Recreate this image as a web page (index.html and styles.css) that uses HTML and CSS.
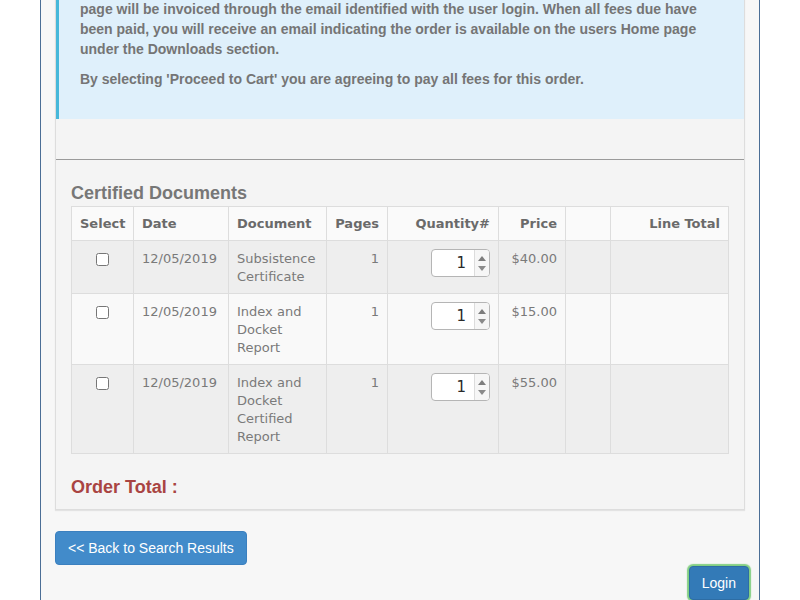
FILE: index.html
```html
<!DOCTYPE html>
<html>
<head>
<meta charset="utf-8">
<link rel="stylesheet" href="styles.css">
</head>
<body>
<div class="page">
  <div class="panel">
    <div class="callout">
      <p class="first">page will be invoiced through the email identified with the user login. When all fees due have been paid, you will receive an email indicating the order is available on the users Home page under the Downloads section.</p>
      <p class="last">By selecting 'Proceed to Cart' you are agreeing to pay all fees for this order.</p>
    </div>
    <div class="divider"></div>
    <div class="section">
      <h4 class="section-title">Certified Documents</h4>
      <table class="docs">
        <colgroup>
          <col class="c-select"><col class="c-date"><col class="c-doc"><col class="c-pages"><col class="c-qty"><col class="c-price"><col class="c-blank"><col class="c-total">
        </colgroup>
        <thead>
          <tr>
            <th class="center">Select</th>
            <th>Date</th>
            <th>Document</th>
            <th class="right">Pages</th>
            <th class="right">Quantity#</th>
            <th class="right">Price</th>
            <th></th>
            <th class="right">Line Total</th>
          </tr>
        </thead>
        <tbody>
          <tr class="odd">
            <td class="center"><input type="checkbox" class="check"></td>
            <td>12/05/2019</td>
            <td>Subsistence Certificate</td>
            <td class="right">1</td>
            <td class="right"><span class="qty"><span class="qty-val">1</span><span class="spin"><span class="up"></span><span class="down"></span></span></span></td>
            <td class="right">$40.00</td>
            <td></td>
            <td></td>
          </tr>
          <tr class="even">
            <td class="center"><input type="checkbox" class="check"></td>
            <td>12/05/2019</td>
            <td>Index and Docket Report</td>
            <td class="right">1</td>
            <td class="right"><span class="qty"><span class="qty-val">1</span><span class="spin"><span class="up"></span><span class="down"></span></span></span></td>
            <td class="right">$15.00</td>
            <td></td>
            <td></td>
          </tr>
          <tr class="odd">
            <td class="center"><input type="checkbox" class="check"></td>
            <td>12/05/2019</td>
            <td>Index and Docket Certified Report</td>
            <td class="right">1</td>
            <td class="right"><span class="qty"><span class="qty-val">1</span><span class="spin"><span class="up"></span><span class="down"></span></span></span></td>
            <td class="right">$55.00</td>
            <td></td>
            <td></td>
          </tr>
        </tbody>
      </table>
      <div class="order-total">Order Total :</div>
    </div>
  </div>
  <div class="actions">
    <button class="btn btn-back">&lt;&lt; Back to Search Results</button>
  </div>
  <div class="login-row">
    <button class="btn btn-login">Login</button>
  </div>
</div>
</body>
</html>
```

FILE: styles.css
```css
html, body {
  margin: 0;
  padding: 0;
  background: #ffffff;
  height: 100%;
  overflow: hidden;
}

.page {
  margin: 0 40px;
  width: 720px;
  min-height: 620px;
  background: #f7f7f7;
  border-left: 1px solid #4b6e96;
  border-right: 1px solid #4b6e96;
  padding: 0 14px;
  box-sizing: border-box;
}

.panel {
  background: #f4f4f4;
  border: 1px solid #dddddd;
  border-top: none;
  box-shadow: 0 1px 1px rgba(0, 0, 0, 0.08);
}

.callout {
  background: #dff0fb;
  border-left: 3px solid #46b8da;
  padding: 0 20px 30px 21px;
  font-family: "Liberation Sans", Arial, sans-serif;
  font-weight: bold;
  font-size: 14px;
  line-height: 20px;
  color: #757575;
}

.callout p {
  margin: 0;
}

.callout p.first {
  margin-top: -1px;
}

.callout p.last {
  margin-top: 10px;
}

.divider {
  margin-top: 40px;
  border-top: 1px solid #9a9a9a;
}

.section {
  padding: 0 15px 12px;
}

.section-title {
  margin: 23px 0 3px;
  font-family: "Liberation Sans", Arial, sans-serif;
  font-size: 18px;
  line-height: 20px;
  font-weight: bold;
  color: #777777;
}

.docs {
  width: 657px;
  table-layout: fixed;
  border-collapse: collapse;
  font-family: "DejaVu Sans", Verdana, sans-serif;
  font-size: 13px;
  line-height: 18px;
  color: #7a7a7a;
}

.c-select { width: 62px; }
.c-date { width: 95px; }
.c-doc { width: 98px; }
.c-pages { width: 61px; }
.c-qty { width: 111px; }
.c-price { width: 67px; }
.c-blank { width: 45px; }
.c-total { width: 118px; }

.docs th,
.docs td {
  border: 1px solid #dddddd;
  padding: 9px 8px 7px;
  vertical-align: top;
  text-align: left;
}

.docs th {
  padding: 8px 8px 7px;
  font-weight: bold;
  color: #6a6a6a;
  background: #fafafa;
}

.docs .center { text-align: center; }
.docs .right { text-align: right; }

.docs tr.odd td { background: #eeeeee; }
.docs tr.even td { background: #f9f9f9; }

.check {
  display: block;
  width: 13px;
  height: 13px;
  margin: 3px auto 0;
}

.qty {
  display: inline-flex;
  width: 59px;
  height: 28px;
  margin-top: -1px;
  box-sizing: border-box;
  border: 1px solid #b5b5b5;
  border-radius: 4px;
  background: #ffffff;
  overflow: hidden;
  vertical-align: top;
  text-align: right;
}

.qty-val {
  flex: 1;
  padding-right: 8px;
  font-family: "DejaVu Sans", Verdana, sans-serif;
  font-size: 15px;
  line-height: 26px;
  color: #2a2a2a;
}

.spin {
  width: 15px;
  border-left: 1px solid #dcdcdc;
  background: #f6f6f6;
  display: flex;
  flex-direction: column;
  align-items: center;
  justify-content: space-between;
  padding: 6px 0 5px;
  box-sizing: border-box;
}

.up {
  width: 0;
  height: 0;
  border-left: 4px solid transparent;
  border-right: 4px solid transparent;
  border-bottom: 5px solid #7d7d7d;
}

.down {
  width: 0;
  height: 0;
  border-left: 4px solid transparent;
  border-right: 4px solid transparent;
  border-top: 5px solid #8a8a8a;
}

.order-total {
  margin-top: 23px;
  font-family: "Liberation Sans", Arial, sans-serif;
  font-size: 18px;
  line-height: 20px;
  font-weight: bold;
  color: #a94442;
}

.actions {
  margin-top: 21px;
}

.btn {
  font-family: "Liberation Sans", Arial, sans-serif;
  font-size: 14px;
  line-height: 20px;
  color: #ffffff;
  border-radius: 4px;
  padding: 6px 12px;
  margin: 0;
  cursor: pointer;
}

.btn-back {
  background: #428bca;
  border: 1px solid #3b80bf;
}

.login-row {
  display: flex;
  justify-content: flex-end;
  margin-top: 1px;
  margin-right: -4px;
}

.btn-login {
  background: #337ab7;
  border: 1px solid #2e6da4;
  padding: 6px 12px;
  box-shadow: 0 0 1px 2px rgba(110, 200, 110, 0.85);
}
```
